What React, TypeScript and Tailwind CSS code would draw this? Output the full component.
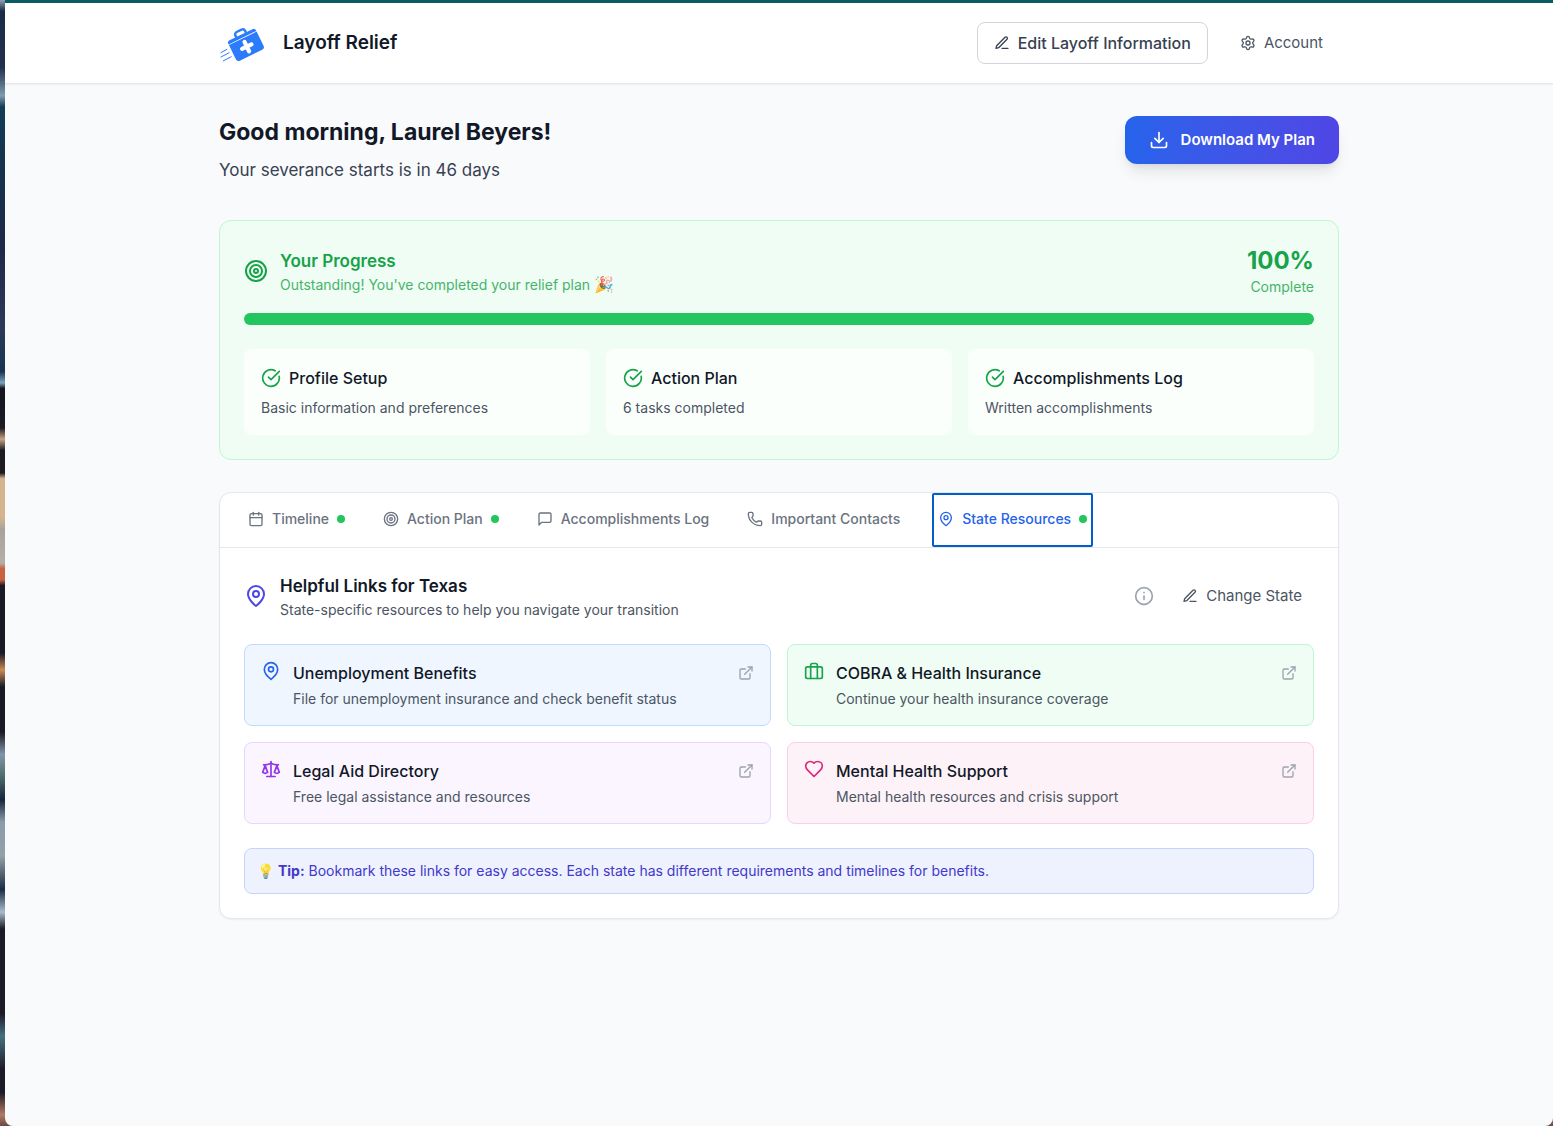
import type { ReactNode } from "react";
import { Calendar, CircleCheckBig, Info, Phone, Scale, Settings, Target } from "lucide-react";

function Glyph({ className, children }: { className: string; children: ReactNode }) {
  return (
    <svg
      className={className}
      viewBox="0 0 24 24"
      fill="none"
      stroke="currentColor"
      strokeWidth="2"
      strokeLinecap="round"
      strokeLinejoin="round"
      aria-hidden="true"
    >
      {children}
    </svg>
  );
}

type IconProps = { className: string };

const Pin = ({ className }: IconProps) => (
  <Glyph className={className}>
    <path d="M20 10c0 6-8 12-8 12s-8-6-8-12a8 8 0 0 1 16 0Z" />
    <circle cx="12" cy="10" r="3" />
  </Glyph>
);

const Pen = ({ className }: IconProps) => (
  <Glyph className={className}>
    <path d="M12 20h9" />
    <path d="M16.5 3.5a2.12 2.12 0 0 1 3 3L7 19l-4 1 1-4Z" />
  </Glyph>
);

const Message = ({ className }: IconProps) => (
  <Glyph className={className}>
    <path d="M21 15a2 2 0 0 1-2 2H7l-4 4V5a2 2 0 0 1 2-2h14a2 2 0 0 1 2 2z" />
  </Glyph>
);

const DownloadIcon = ({ className }: IconProps) => (
  <Glyph className={className}>
    <path d="M21 15v4a2 2 0 0 1-2 2H5a2 2 0 0 1-2-2v-4" />
    <path d="M7 10l5 5 5-5" />
    <path d="M12 15V3" />
  </Glyph>
);

const BriefcaseIcon = ({ className }: IconProps) => (
  <Glyph className={className}>
    <rect x="2" y="7" width="20" height="14" rx="2" />
    <path d="M16 21V5a2 2 0 0 0-2-2h-4a2 2 0 0 0-2 2v16" />
  </Glyph>
);

const HeartIcon = ({ className }: IconProps) => (
  <Glyph className={className}>
    <path d="M19 14c1.49-1.46 3-3.21 3-5.5A5.5 5.5 0 0 0 16.5 3c-1.76 0-3 .5-4.5 2-1.5-1.5-2.74-2-4.5-2A5.5 5.5 0 0 0 2 8.5c0 2.3 1.5 4.05 3 5.5l7 7Z" />
  </Glyph>
);

const External = ({ className }: IconProps) => (
  <Glyph className={className}>
    <path d="M18 13v6a2 2 0 0 1-2 2H5a2 2 0 0 1-2-2V8a2 2 0 0 1 2-2h6" />
    <path d="M15 3h6v6" />
    <path d="M10 14 21 3" />
  </Glyph>
);

function Logo() {
  return (
    <svg className="size-12" viewBox="0 0 48 48" fill="none" aria-hidden="true">
      <g transform="translate(27 26) rotate(-26)">
        <path
          d="M-5.4-11v-2.2a2.6 2.6 0 0 1 2.6-2.6h5.6a2.6 2.6 0 0 1 2.6 2.6v2.2"
          stroke="#2b7bfb"
          strokeWidth="2.4"
        />
        <path d="M-15.4-8.2v-.6a2.6 2.6 0 0 1 2.6-2.6h25.6a2.6 2.6 0 0 1 2.6 2.6v.6z" fill="#2b7bfb" />
        <path d="M-15.4-7.4h30.8v15.8a3 3 0 0 1-3 3h-24.8a3 3 0 0 1-3-3z" fill="#2b7bfb" />
        <path d="M0-3.4V7M-5.2 1.8H5.2" stroke="#fff" strokeWidth="4.2" strokeLinecap="round" />
      </g>
      <path d="M2 33.6l5.8-3.2M2 38l8-4.2M4.4 41.8l7.8-4" stroke="#2b7bfb" strokeWidth="1" strokeLinecap="round" />
    </svg>
  );
}

const steps = [
  { title: "Profile Setup", note: "Basic information and preferences" },
  { title: "Action Plan", note: "6 tasks completed" },
  { title: "Accomplishments Log", note: "Written accomplishments" },
];

const tabs = [
  { label: "Timeline", icon: Calendar, dot: true, active: false },
  { label: "Action Plan", icon: Target, dot: true, active: false },
  { label: "Accomplishments Log", icon: Message, dot: false, active: false },
  { label: "Important Contacts", icon: Phone, dot: false, active: false },
  { label: "State Resources", icon: Pin, dot: true, active: true },
];

const links = [
  {
    title: "Unemployment Benefits",
    note: "File for unemployment insurance and check benefit status",
    icon: Pin,
    box: "bg-[#eff6ff] border-[#bfdbfe]",
    tint: "text-[#2563eb]",
  },
  {
    title: "COBRA & Health Insurance",
    note: "Continue your health insurance coverage",
    icon: BriefcaseIcon,
    box: "bg-[#f0fdf4] border-[#bbf7d0]",
    tint: "text-[#16a34a]",
  },
  {
    title: "Legal Aid Directory",
    note: "Free legal assistance and resources",
    icon: Scale,
    box: "bg-[#faf5ff] border-[#e9d5ff]",
    tint: "text-[#9333ea]",
  },
  {
    title: "Mental Health Support",
    note: "Mental health resources and crisis support",
    icon: HeartIcon,
    box: "bg-[#fdf2f8] border-[#fbcfe8]",
    tint: "text-[#db2777]",
  },
];

export default function App() {
  return (
    <div className="flex min-h-screen bg-[linear-gradient(to_bottom,#8fa0b0_0%,#1c2b47_1%,#22304e_6%,#7f9bb0_8.5%,#123c55_9.5%,#17324d_15%,#1d2a47_22%,#2b3a58_29%,#1a3352_33%,#7ba4bb_34%,#14151f_34.5%,#1d1a24_38%,#c8a184_39%,#1c1b22_40%,#1c1b22_42%,#d3b48c_42.5%,#d3b48c_46%,#a8a29e_47%,#b5afa9_50%,#c8623f_50.5%,#c8623f_51.5%,#191a26_52%,#191a26_58%,#c98a55_59.5%,#191a26_61%,#191a26_65%,#8295a8_67%,#4d6b6b_69%,#16263b_71%,#8a9cab_73%,#93a1a8_76%,#1b2d45_79%,#a9bccd_81%,#1c1a26_82.5%,#1c1a26_90%,#47707f_92%,#1c1a26_95%,#1c1a26_97%,#b07a66_99%,#6b4a40_100%)] pl-[5px] font-[Inter,'Noto_Sans',sans-serif] text-[#111827]">
      <div className="min-w-0 flex-1 rounded-b-lg border-t-3 border-[#0b5c66] bg-[#f9fafb]">
        <header className="border-b border-[#e5e7eb] bg-white shadow-xs">
          <div className="mx-auto flex h-20 max-w-6xl items-center justify-between px-4">
            <a href="#home" className="flex items-center gap-4">
              <Logo />
              <span className="text-[19px] leading-7 font-semibold">Layoff Relief</span>
            </a>
            <div className="flex items-center gap-4">
              <button className="flex items-center gap-2 rounded-lg border border-[#d1d5db] px-4 py-2 font-medium text-[#374151]">
                <Pen className="size-4" />
                Edit Layoff Information
              </button>
              <button className="flex items-center gap-2 px-4 py-2 text-[15px] leading-6 text-[#4b5563]">
                <Settings className="size-4" />
                Account
              </button>
            </div>
          </div>
        </header>

        <main className="mx-auto max-w-6xl px-4 py-8">
          <div className="mb-9 flex items-start justify-between">
            <div>
              <h1 className="text-[23px] leading-8 font-bold">Good morning, Laurel Beyers!</h1>
              <p className="mt-2 text-[17px] leading-7 text-[#374151]">Your severance starts is in 46 days</p>
            </div>
            <button className="flex items-center gap-3 rounded-xl bg-linear-to-r from-[#2563eb] to-[#4f46e5] px-6 py-3 text-[15px] leading-6 font-semibold text-white shadow-lg">
              <DownloadIcon className="size-5" />
              Download My Plan
            </button>
          </div>

          <section className="rounded-xl border border-[#bbf7d0] bg-[#f0fdf4] p-6 text-[#16a34a]">
            <div className="mb-4 flex items-center justify-between">
              <div className="flex items-center gap-3">
                <Target className="size-6" />
                <div>
                  <h2 className="text-[17px] leading-7 font-semibold">Your Progress</h2>
                  <p className="text-sm opacity-80">
                    Outstanding! You've completed your relief plan <span className="text-base leading-none">🎉</span>
                  </p>
                </div>
              </div>
              <div className="text-right">
                <div className="text-2xl font-bold">100%</div>
                <div className="text-sm opacity-80">Complete</div>
              </div>
            </div>
            <div className="mb-6 h-3 rounded-full bg-[#22c55e]" role="progressbar" aria-label="Your Progress" aria-valuenow={100} />
            <div className="grid grid-cols-3 gap-4">
              {steps.map((step) => (
                <div key={step.title} className="rounded-lg border border-white/20 bg-white/70 p-4">
                  <div className="mb-2 flex items-center gap-2">
                    <CircleCheckBig className="size-5" />
                    <h3 className="font-medium text-[#111827]">{step.title}</h3>
                  </div>
                  <p className="text-sm text-[#4b5563]">{step.note}</p>
                </div>
              ))}
            </div>
          </section>

          <section className="mt-8 rounded-xl border border-[#e5e7eb] bg-white shadow-xs">
            <nav className="flex gap-[30px] border-b border-[#e5e7eb] px-6">
              {tabs.map(({ label, icon: Icon, dot, active }) => (
                <button
                  key={label}
                  className={
                    active
                      ? "relative flex items-center gap-2 border-b-2 border-[#3b82f6] px-1 py-4 text-sm font-medium text-[#2563eb]"
                      : "relative flex items-center gap-2 border-b-2 border-transparent px-1 py-4 text-sm font-medium text-[#6b7280]"
                  }
                >
                  <Icon className="size-4" />
                  {label}
                  {dot && <span className="size-2 rounded-full bg-[#22c55e]" />}
                  {active && <span className="absolute -inset-x-0.5 top-0 -bottom-0.5 rounded-xs border-2 border-[#005fcc]" />}
                </button>
              ))}
            </nav>

            <div className="p-6">
              <div className="mb-6 flex items-center justify-between">
                <div className="flex items-center gap-3">
                  <Pin className="size-6 text-[#4f46e5]" />
                  <div>
                    <h2 className="text-[17px] leading-7 font-semibold">Helpful Links for Texas</h2>
                    <p className="text-sm text-[#4b5563]">State-specific resources to help you navigate your transition</p>
                  </div>
                </div>
                <div className="flex items-center gap-4">
                  <button aria-label="About these links" className="text-[#9ca3af]">
                    <Info className="size-5" />
                  </button>
                  <button className="flex items-center gap-2 px-3 text-[15px] leading-6 text-[#4b5563]">
                    <Pen className="size-4" />
                    Change State
                  </button>
                </div>
              </div>

              <div className="grid grid-cols-2 gap-4">
                {links.map(({ title, note, icon: Icon, box, tint }) => (
                  <a key={title} href="#resource" className={`flex items-start gap-3 rounded-lg border p-4 ${box}`}>
                    <Icon className={`size-5 shrink-0 ${tint}`} />
                    <div className="min-w-0 flex-1">
                      <div className="mb-1 flex items-center justify-between">
                        <h3 className="font-medium">{title}</h3>
                        <External className="size-4 text-[#9ca3af]" />
                      </div>
                      <p className="text-sm text-[#4b5563]">{note}</p>
                    </div>
                  </a>
                ))}
              </div>

              <p className="mt-6 rounded-lg border border-[#c7d2fe] bg-[#eef2ff] p-3 text-sm text-[#4338ca]">
                <span className="opacity-80">💡</span> <strong>Tip:</strong> Bookmark these links for easy access. Each state has
                different requirements and timelines for benefits.
              </p>
            </div>
          </section>
        </main>
      </div>
    </div>
  );
}
